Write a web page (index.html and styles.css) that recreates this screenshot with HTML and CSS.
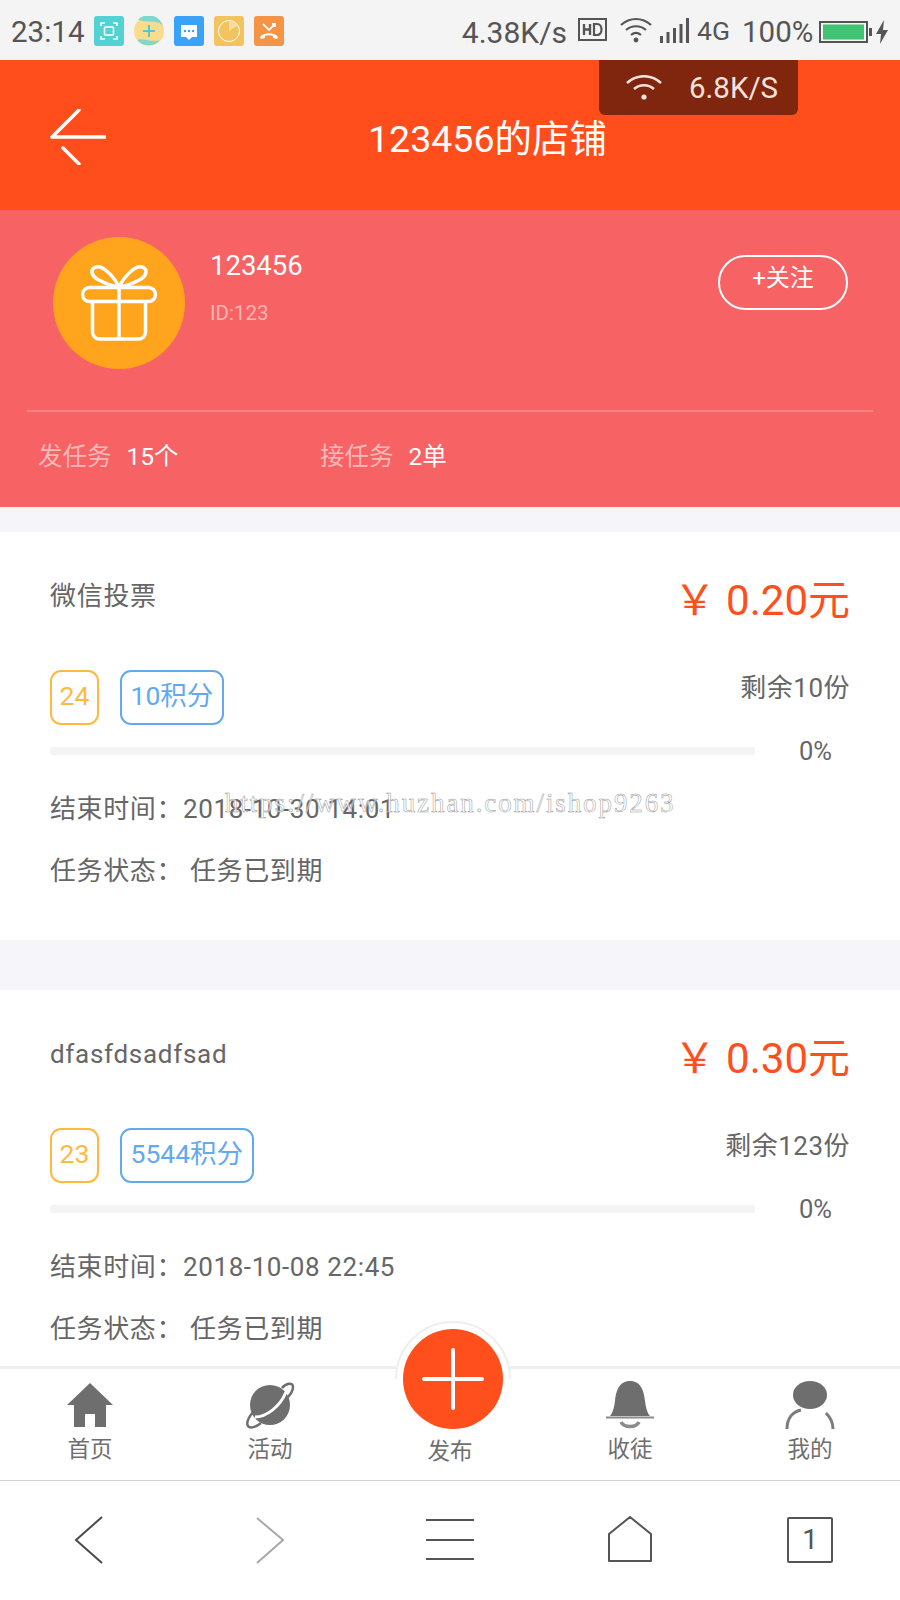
FILE: index.html
```html
<!DOCTYPE html>
<html lang="zh-CN">
<head>
    <meta charset="UTF-8">
    <meta name="viewport" content="width=device-width, initial-scale=1.0">
    <title>123456的店铺</title>
    <link rel="stylesheet" href="styles.css">
</head>
<body>
<div class="phone">

    <!-- system status bar -->
    <div class="statusbar">
        <div class="status-left">
            <span class="clock">23:14</span>
            <svg class="app-icon" viewBox="0 0 30 30"><rect width="30" height="30" rx="3" fill="#52d2d2"/><g fill="none" stroke="#fff" stroke-width="1.6"><path d="M7 10V7h4M19 7h4v3M23 20v3h-4M11 23H7v-3"/><rect x="10.500" y="11" width="9" height="8" rx="1"/></g></svg>
            <svg class="app-icon" viewBox="0 0 30 30"><circle cx="15" cy="15" r="15" fill="#fbdc8c"/><path d="M4 3.500A15 15 0 0 1 29 10 C24 3 14 8 4 3.500zM3 24c6-3 14 3 23 0a15 15 0 0 1-23 0z" fill="#7ed8cf"/><path d="M15 9v12M9 15h12" stroke="#52c8d0" stroke-width="2"/></svg>
            <svg class="app-icon" viewBox="0 0 30 30"><rect width="30" height="30" rx="3" fill="#3aa2f8"/><path d="M7 9h16v12h-5l-3 3-3-3H7z" fill="#fff"/><g fill="#3aa2f8"><circle cx="11" cy="15" r="1.200"/><circle cx="15" cy="15" r="1.200"/><circle cx="19" cy="15" r="1.200"/></g></svg>
            <svg class="app-icon" viewBox="0 0 30 30"><rect width="30" height="30" rx="3" fill="#f3c35f"/><circle cx="15" cy="15" r="10.500" fill="none" stroke="#fff" stroke-width="1"/><path d="M15 5a10 10 0 0 1 8 5l-8 5z" fill="#fbdc9a"/></svg>
            <svg class="app-icon" viewBox="0 0 30 30"><rect width="30" height="30" rx="3" fill="#f49444"/><path d="M9 8l6 6 6-6M18 8h3v3" fill="none" stroke="#fff" stroke-width="1.800"/><path d="M6 21c4-5 14-5 18 0l-1 2-4-1v-2c-2-1-6-1-8 0v2l-4 1z" fill="#fff"/></svg>
        </div>
        <div class="status-right">
            <span class="speed">4.38K/s</span>
            <svg class="hd-icon" viewBox="0 0 29 24"><rect x="1" y="1" width="27" height="21" fill="none" stroke="#555" stroke-width="2"/><path d="M6 6v11M12 6v11M6 11.500h6" stroke="#555" stroke-width="2.400" fill="none"/><path d="M16 6v11h3c6 0 6-11 0-11z" fill="none" stroke="#555" stroke-width="2.200"/></svg>
            <svg class="wifi-icon" viewBox="0 0 32 26"><g fill="none" stroke="#555" stroke-width="2.200"><path d="M1 8c9-8 21-8 30 0"/><path d="M6 13c6-5 14-5 20 0"/><path d="M11 18c3-2.500 7-2.500 10 0"/></g><circle cx="16" cy="23" r="2.400" fill="#555"/></svg>
            <svg class="signal-icon" viewBox="0 0 30 26"><g fill="#555"><rect x="0" y="18" width="3" height="7"/><rect x="6.500" y="14" width="3" height="11"/><rect x="13" y="10" width="3" height="15"/><rect x="19.500" y="6" width="3" height="19"/><rect x="26" y="0" width="3" height="25"/></g></svg>
            <span class="net-type">4G</span>
            <span class="percent">100%</span>
            <svg class="battery-icon" viewBox="0 0 54 24"><rect x="1" y="2" width="47" height="20" fill="none" stroke="#555" stroke-width="2"/><rect x="4" y="4.500" width="41" height="15" fill="#41c472"/><rect x="50" y="8" width="3" height="8" fill="#555"/></svg>
            <svg class="bolt-icon" viewBox="0 0 14 24"><path d="M9 0L1 14h5l-1 10 8-14H8z" fill="#555"/></svg>
        </div>
    </div>

    <!-- page header -->
    <div class="header">
        <svg class="back-arrow" viewBox="0 0 56 56"><path d="M29 1L2 28h54M13 39l16 16" fill="none" stroke="#fff" stroke-width="3.500" stroke-linecap="round" stroke-linejoin="round"/></svg>
        <h1 class="shop-title">123456的店铺</h1>
        <div class="net-toast">
            <svg class="toast-wifi" viewBox="0 0 36 26"><g fill="none" stroke="#f3e3dd" stroke-width="2.600"><path d="M1 8c10-9 24-9 34 0"/><path d="M8 14c6-5 14-5 20 0"/></g><circle cx="18" cy="22" r="2.600" fill="#f3e3dd"/></svg>
            <span>6.8K/S</span>
        </div>
    </div>

    <!-- shop profile -->
    <div class="profile">
        <div class="profile-top">
            <div class="avatar">
                <svg viewBox="0 0 132 132" width="132" height="132"><g fill="none" stroke="#fff" stroke-width="3.500" stroke-linejoin="round"><rect x="29.500" y="50.500" width="73" height="14" rx="7"/><path d="M39.500 65v30a7 7 0 0 0 7 7h39a7 7 0 0 0 7-7V65"/><path d="M66 50v52"/><path d="M66 50C60 38 49 28 43 30c-6 2-5 8 1 12 7 4 15 7 22 8z"/><path d="M66 50c6-12 17-22 23-20 6 2 5 8-1 12-7 4-15 7-22 8z"/></g></svg>
            </div>
            <div class="shop-info">
                <div class="shop-name">123456</div>
                <div class="shop-id">ID:123</div>
            </div>
            <div class="follow-btn">+关注</div>
        </div>
        <div class="profile-stats">
            <div class="stat"><span class="stat-label">发任务</span><span class="stat-value">15个</span></div>
            <div class="stat"><span class="stat-label">接任务</span><span class="stat-value">2单</span></div>
        </div>
    </div>

    <!-- task list -->
    <div class="task-list">
        <div class="task-card">
            <div class="task-head">
                <div class="task-title">微信投票</div>
                <div class="task-price">￥ 0.20元</div>
            </div>
            <div class="task-tags">
                <span class="tag tag-orange">24</span>
                <span class="tag tag-blue">10积分</span>
                <span class="task-left">剩余10份</span>
            </div>
            <div class="task-progress">
                <div class="progress-track"></div>
                <span class="progress-num">0%</span>
            </div>
            <div class="task-line">结束时间：2018-10-30 14:01</div>
            <div class="task-line task-status"><span>任务状态：</span><span>任务已到期</span></div>
        </div>

        <div class="task-card">
            <div class="task-head">
                <div class="task-title">dfasfdsadfsad</div>
                <div class="task-price">￥ 0.30元</div>
            </div>
            <div class="task-tags">
                <span class="tag tag-orange">23</span>
                <span class="tag tag-blue">5544积分</span>
                <span class="task-left">剩余123份</span>
            </div>
            <div class="task-progress">
                <div class="progress-track"></div>
                <span class="progress-num">0%</span>
            </div>
            <div class="task-line">结束时间：2018-10-08 22:45</div>
            <div class="task-line task-status"><span>任务状态：</span><span>任务已到期</span></div>
        </div>

        <div class="watermark">https://www.huzhan.com/ishop9263</div>
    </div>

    <!-- bottom tabs -->
    <div class="tabbar">
        <div class="tab">
            <svg class="tab-icon" viewBox="0 0 48 48"><path d="M24 2L1 24h7v22h11V33h10v13h11V24h7z" fill="#6e6e6e"/></svg>
            <span>首页</span>
        </div>
        <div class="tab">
            <svg class="tab-icon" viewBox="0 0 48 48"><circle cx="24" cy="24" r="20" fill="#6e6e6e"/><path d="M9 36C20 36 34 26 40 11" fill="none" stroke="#fff" stroke-width="3"/><g fill="none" stroke="#6e6e6e" stroke-width="2.500"><path d="M36 7c4-5 11-6 11-1 0 3-2 7-6 11"/><path d="M7 31c-4 5-7 11-5 14 2 3 8 1 13-3"/></g></svg>
            <span>活动</span>
        </div>
        <div class="tab tab-publish">
            <span>发布</span>
        </div>
        <div class="tab">
            <svg class="tab-icon" viewBox="0 0 48 48"><path d="M24 0C13 0 10 10 9 20c-1 8-3 13-5 15h40c-2-2-4-7-5-15C38 10 35 0 24 0z" fill="#6e6e6e"/><path d="M0 36.500h48" stroke="#8a8a8a" stroke-width="2"/><path d="M15 41c3 6 15 6 18 0" fill="none" stroke="#8a8a8a" stroke-width="3.500"/></svg>
            <span>收徒</span>
        </div>
        <div class="tab">
            <svg class="tab-icon" viewBox="0 0 50 48"><ellipse cx="25" cy="14" rx="17" ry="14" fill="#6e6e6e"/><path d="M2 48c0-10 5-17 14-19M41 32c4 4 7 9 7 16" fill="none" stroke="#7c7c7c" stroke-width="3"/></svg>
            <span>我的</span>
        </div>
        <div class="publish-btn">
            <svg viewBox="0 0 100 100" width="100" height="100"><circle cx="50" cy="50" r="50" fill="#ff4f1c"/><path d="M21 50h58M50 21v58" stroke="#fff" stroke-width="4" stroke-linecap="round"/></svg>
        </div>
    </div>

    <!-- browser toolbar -->
    <div class="browser-bar">
        <svg class="nav-icon" viewBox="0 0 48 48"><path d="M36 1L10 24l26 23" fill="none" stroke="#4a4a4a" stroke-width="2"/></svg>
        <svg class="nav-icon" viewBox="0 0 48 48"><path d="M11 2l26 22-26 23" fill="none" stroke="#a8a8a8" stroke-width="2"/></svg>
        <svg class="nav-icon" viewBox="0 0 48 48"><path d="M0 4h48M0 24h48M0 43h48" fill="none" stroke="#555" stroke-width="2"/></svg>
        <svg class="nav-icon" viewBox="0 0 48 48"><path d="M24 1L3 18v27a2 2 0 0 0 0 0h42V18z" fill="none" stroke="#555" stroke-width="2" stroke-linejoin="round"/></svg>
        <div class="tab-count">1</div>
    </div>
</div>
</body>
</html>
```

FILE: styles.css
```css
* {
    box-sizing: border-box;
}

body {
    margin: 0;
    font-family: Roboto, "Noto Sans CJK SC", sans-serif;
    color: #666;
    background-color: #fff;
}

.phone {
    position: relative;
    width: 900px;
    height: 1600px;
    display: flex;
    flex-direction: column;
    overflow: hidden;
}

/* status bar */
.statusbar {
    height: 60px;
    flex: none;
    background-color: #f4f4f4;
    color: #555;
    display: flex;
    justify-content: space-between;
    align-items: center;
    padding: 4px 11px 0 11px;
}

.status-left,
.status-right {
    display: flex;
    align-items: center;
}

.clock {
    font-size: 29.5px;
    width: 83px;
}

.app-icon {
    width: 30px;
    height: 30px;
    margin-right: 10px;
    margin-top: -3px;
}

.speed {
    font-size: 30px;
    margin-right: 11px;
}

.hd-icon {
    width: 29px;
    height: 24px;
    margin-right: 13px;
    margin-top: -4px;
}

.wifi-icon {
    width: 32px;
    height: 26px;
    margin-right: 8px;
    margin-top: -4px;
}

.signal-icon {
    width: 30px;
    height: 26px;
    margin-right: 7px;
    margin-top: -3px;
}

.net-type {
    font-size: 26.500px;
    width: 45px;
    margin-top: -3px;
}

.percent {
    font-size: 29.5px;
    width: 77px;
}

.battery-icon {
    width: 54px;
    height: 24px;
    margin-right: 2px;
}

.bolt-icon {
    width: 14px;
    height: 24px;
}

/* header */
.header {
    position: relative;
    height: 150px;
    flex: none;
    background-color: #ff4e1b;
    display: flex;
    align-items: center;
    padding: 0 50px;
}

.back-arrow {
    width: 56px;
    height: 56px;
    flex: none;
    margin-top: 3px;
}

.shop-title {
    flex: 1;
    margin: 0;
    padding-left: 19px;
    text-align: center;
    color: #fff;
    font-size: 37.5px;
    font-weight: 400;
}

.net-toast {
    position: absolute;
    top: 0;
    left: 599px;
    width: 199px;
    height: 55px;
    background-color: #80260e;
    border-radius: 0 0 6px 6px;
    color: #f3e3dd;
    display: flex;
    align-items: center;
    padding-left: 27px;
    font-size: 29.5px;
}

.toast-wifi {
    width: 36px;
    height: 26px;
    margin-right: 27px;
}

/* profile */
.profile {
    height: 297px;
    flex: none;
    background-color: #f76364;
    padding: 27px 27px 0;
}

.profile-top {
    height: 175px;
    border-bottom: 2px solid #fb8284;
    display: flex;
    padding-left: 26px;
    padding-right: 25px;
}

.avatar {
    width: 132px;
    height: 132px;
    flex: none;
    border-radius: 50%;
    background-color: #ffa41c;
}

.shop-info {
    flex: 1;
    padding-left: 25px;
}

.shop-name {
    color: #fff;
    font-size: 27.500px;
    line-height: 32px;
    margin-top: 13px;
}

.shop-id {
    color: #fbb4b4;
    font-size: 20.500px;
    line-height: 26px;
    margin-top: 18px;
}

.follow-btn {
    width: 130px;
    height: 55px;
    margin-top: 18px;
    border: 2px solid #fff;
    border-radius: 28px;
    color: #fff;
    font-size: 24px;
    line-height: 42px;
    text-align: center;
}

.profile-stats {
    display: flex;
    padding: 27px 0 0 11px;
}

.stat {
    width: 282px;
    font-size: 24.500px;
    line-height: 36px;
}

.stat-label {
    color: #fbb8b8;
    margin-right: 15px;
}

.stat-value {
    color: #fff;
}

/* tasks */
.task-list {
    position: relative;
    flex: 1;
    min-height: 0;
    overflow: hidden;
    background-color: #f5f5fa;
    padding-top: 25px;
}

.task-card {
    height: 408px;
    margin-bottom: 50px;
    background-color: #fff;
    padding: 0 50px;
}

.task-head {
    display: flex;
    justify-content: space-between;
    height: 138px;
    padding-top: 40px;
}

.task-title {
    font-size: 26px;
    line-height: 44px;
    letter-spacing: 0.7px;
    margin-top: 2px;
    color: #666;
}

.task-price {
    font-size: 42px;
    line-height: 56px;
    margin-top: 1px;
    color: #ff4f1c;
}

.task-tags {
    display: flex;
    align-items: flex-start;
    height: 77px;
}

.tag {
    height: 55px;
    border: 2px solid;
    border-radius: 11px;
    font-size: 26.500px;
    line-height: 48px;
    padding: 0 8.500px;
}

.tag-orange {
    width: 49px;
    padding: 0;
    text-align: center;
    color: #ffb940;
    border-color: #ffb940;
    margin-right: 21px;
}

.tag-blue {
    color: #62a9ee;
    border-color: #62a9ee;
}

.task-left {
    margin-left: auto;
    font-size: 26px;
    line-height: 36px;
    letter-spacing: 0.5px;
}

.task-progress {
    display: flex;
    align-items: center;
    height: 8px;
}

.progress-track {
    width: 705px;
    height: 8px;
    background-color: #f4f4f4;
    border-radius: 2px;
}

.progress-num {
    margin-left: 44px;
    font-size: 25.500px;
}

.task-line {
    font-size: 26px;
    line-height: 36px;
    letter-spacing: 0.6px;
    margin-top: 36px;
}

.task-line + .task-line {
    margin-top: 26px;
}

.task-status {
    display: flex;
    gap: 7px;
}

.watermark {
    position: absolute;
    left: 225px;
    top: 281px;
    font-family: "Liberation Serif", serif;
    font-size: 27px;
    letter-spacing: 1.900px;
    color: rgba(255, 255, 255, 0.7);
    -webkit-text-stroke: 0.5px #999;
    white-space: nowrap;
}

/* bottom tabs */
.tabbar {
    position: relative;
    height: 115px;
    flex: none;
    background-color: #fff;
    border-top: 3px solid #eee;
    border-bottom: 1px solid #d2d2d2;
    display: flex;
}

.tab {
    flex: 1;
    display: flex;
    flex-direction: column;
    align-items: center;
    padding-top: 12px;
    font-size: 22.500px;
    color: #6e6e6e;
}

.tab-icon {
    width: 50px;
    height: 48px;
    margin-bottom: 3px;
}

.tab span {
    line-height: 34px;
}

.tab-publish {
    justify-content: flex-end;
    padding-bottom: 12px;
}

.publish-btn {
    position: absolute;
    left: 395px;
    top: -48px;
    width: 116px;
    height: 116px;
    padding: 8px;
    border-radius: 50%;
    background-color: #fff;
}

/* grey ring only shows above the tab line */
.publish-btn::before {
    content: "";
    position: absolute;
    inset: 0;
    border: 2px solid #eee;
    border-radius: 50%;
    clip-path: inset(0 0 58px 0);
}

.publish-btn svg {
    position: relative;
}

/* browser toolbar */
.browser-bar {
    height: 119px;
    flex: none;
    background-color: #fff;
    display: flex;
    align-items: center;
    padding-bottom: 2px;
}

.nav-icon {
    width: 48px;
    height: 48px;
    margin-left: 66px;
    margin-right: 66px;
}

.tab-count {
    width: 46px;
    height: 46px;
    margin-left: 67px;
    border: 2px solid #555;
    border-radius: 2px;
    color: #555;
    font-size: 28px;
    line-height: 42px;
    text-align: center;
}
```
